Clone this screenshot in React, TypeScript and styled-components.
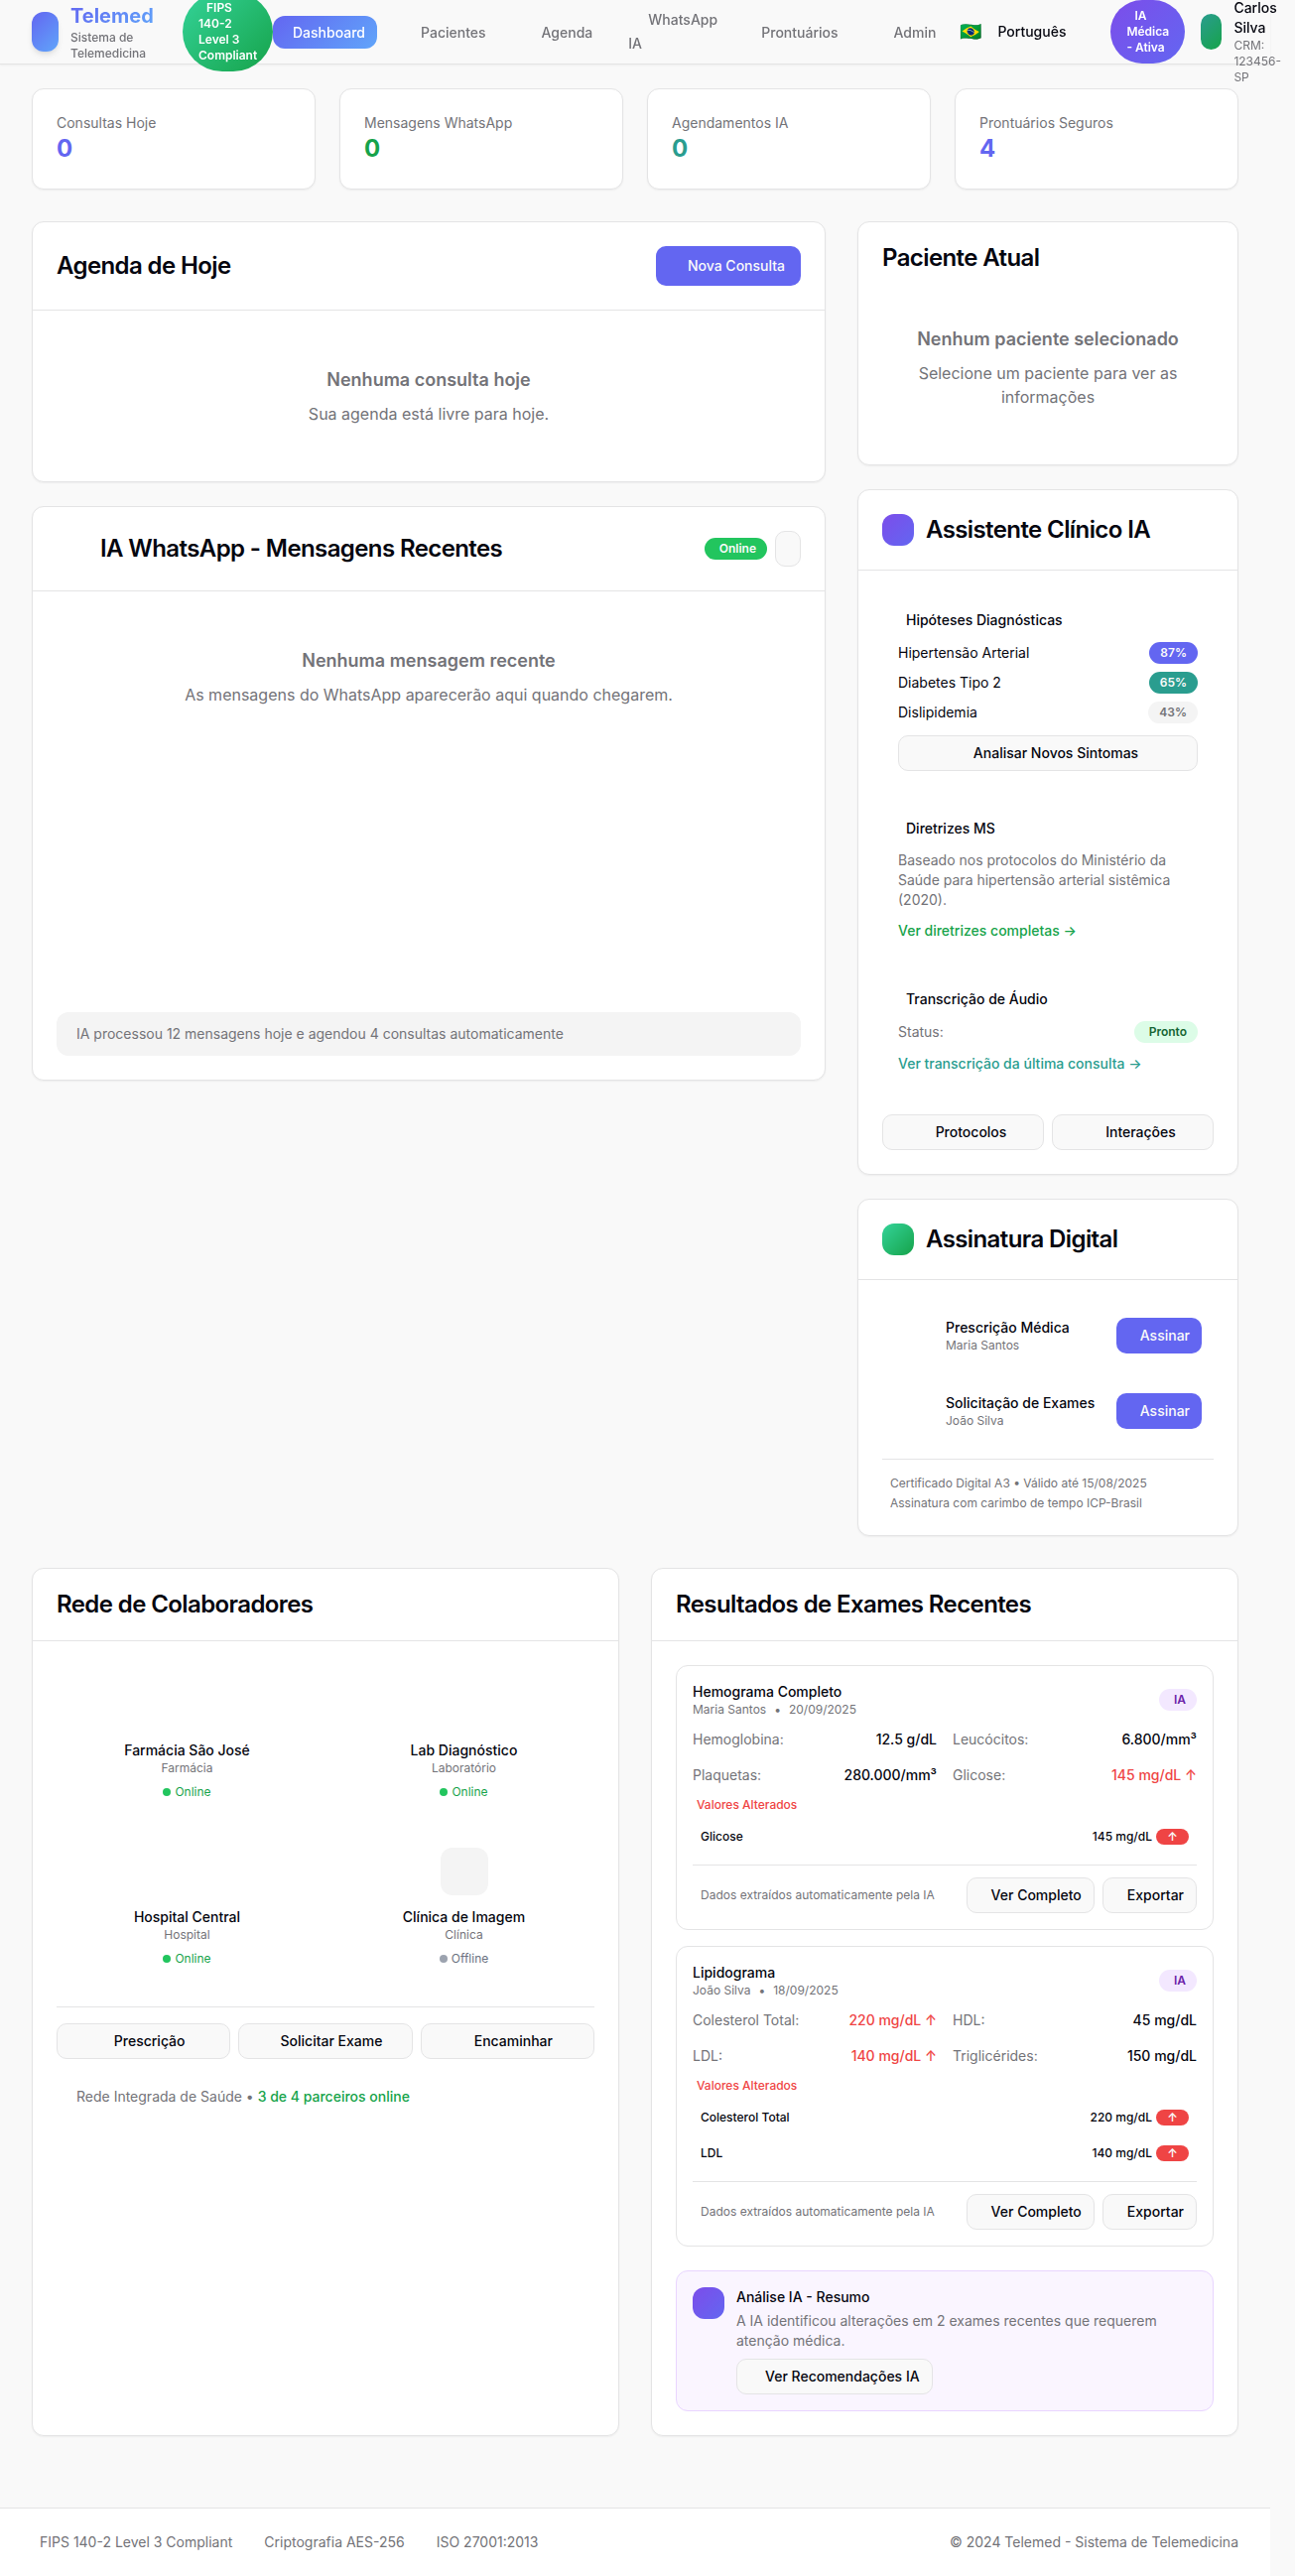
import React from "react";
import styled, { createGlobalStyle, css } from "styled-components";

const c = {
  bg: "#f9f9f9",
  card: "#ffffff",
  border: "#e4e4e5",
  text: "#05060f",
  muted: "#737378",
  soft: "#f4f4f4",
  primary: "#6366f1",
  green: "#16a34a",
  teal: "#2a9d8f",
  red: "#ef4444",
};

const grad = {
  primary: "linear-gradient(135deg, #6366f1, #60a5fa)",
  security: "linear-gradient(135deg, #34d399, #16a34a)",
  ai: "linear-gradient(135deg, #7c4dea, #6366f1)",
  avatar: "linear-gradient(135deg, #2a9d8f, #16a34a)",
};

const Global = createGlobalStyle`
  *, *::before, *::after { box-sizing: border-box; }
  body {
    margin: 0;
    background: ${c.bg};
    color: ${c.text};
    font-family: Inter, "Liberation Sans", sans-serif;
    font-size: 16px;
    line-height: 24px;
    overflow-x: hidden;
  }
  h1, h2, h3, h4, p { margin: 0; }
  button { font-family: inherit; margin: 0; }
`;

const Page = styled.div`
  width: 1280px;
`;

/* ---------- header ---------- */

const Header = styled.header`
  position: relative;
  display: flex;
  align-items: center;
  height: 65px;
  padding: 0 32px;
  background: rgba(249, 249, 249, 0.95);
  border-bottom: 1px solid ${c.border};
  box-shadow: 0 1px 2px rgba(0, 0, 0, 0.05);
  backdrop-filter: blur(4px);
  > * { flex-shrink: 0; }
`;

const Brand = styled.div`
  display: flex;
  align-items: center;
  gap: 12px;
  width: 152px;
`;

const Logo = styled.div`
  width: 27px;
  height: 40px;
  flex-shrink: 0;
  border-radius: 12px;
  background: ${grad.primary};
  box-shadow: 0 4px 6px -1px rgba(0, 0, 0, 0.1), 0 2px 4px -2px rgba(0, 0, 0, 0.1);
`;

const BrandText = styled.div`
  width: 84px;
`;

const BrandName = styled.h1`
  font-size: 20px;
  line-height: 28px;
  font-weight: 700;
  background: ${grad.primary};
  background-clip: text;
  -webkit-background-clip: text;
  color: transparent;
`;

const BrandSub = styled.p`
  font-size: 12px;
  line-height: 16px;
  font-weight: 500;
  color: ${c.muted};
`;

const HeaderPill = styled.div<{ $w: number; $bg: string }>`
  width: ${(p) => p.$w}px;
  padding: 8px 16px;
  border-radius: 999px;
  background: ${(p) => p.$bg};
  color: #fff;
  font-size: 12px;
  line-height: 16px;
  font-weight: 600;
  text-indent: 8px;
`;

const Nav = styled.nav`
  display: flex;
  align-items: center;
  gap: 24px;
`;

const NavItem = styled.a<{ $active?: boolean }>`
  padding: 8px 12px 8px 20px;
  border-radius: 12px;
  font-size: 14px;
  line-height: 17px;
  font-weight: 500;
  color: ${(p) => (p.$active ? "#fff" : c.muted)};
  background: ${(p) => (p.$active ? grad.primary : "none")};
`;

const NavWrapped = styled.a`
  width: 90px;
  font-size: 14px;
  line-height: 24px;
  font-weight: 500;
  color: ${c.muted};
  text-indent: 20px;
`;

const Language = styled.div`
  display: flex;
  align-items: center;
  gap: 16px;
  margin-left: 12px;
  width: 152px;
  font-size: 14px;
  line-height: 20px;
  font-weight: 500;
`;

const Flag = styled.span`
  width: 22px;
  font-size: 18px;
  line-height: 28px;
`;

const Avatar = styled.div`
  width: 21px;
  height: 36px;
  margin: 0 12px 0 16px;
  border-radius: 999px;
  background: ${grad.avatar};
`;

const Doctor = styled.div`
  width: 48px;
  margin-top: 20px;
`;

const DoctorName = styled.p`
  font-size: 14px;
  line-height: 20px;
  font-weight: 500;
`;

const DoctorCrm = styled.p`
  font-size: 12px;
  line-height: 16px;
  color: ${c.muted};
`;

/* ---------- shared parts ---------- */

const Main = styled.main`
  padding: 24px 32px;
`;

const Card = styled.section`
  background: ${c.card};
  border: 1px solid ${c.border};
  border-radius: 12px;
  box-shadow: 0 1px 2px rgba(0, 0, 0, 0.05);
`;

const CardHeader = styled.div<{ $plain?: boolean }>`
  display: flex;
  align-items: center;
  justify-content: space-between;
  padding: 24px;
  ${(p) => !p.$plain && css`border-bottom: 1px solid ${c.border};`}
`;

const Title = styled.h2<{ $indent?: number }>`
  margin-left: ${(p) => p.$indent ?? 0}px;
  font-size: 24px;
  line-height: 24px;
  font-weight: 600;
  letter-spacing: -0.6px;
`;

const TitleGroup = styled.div`
  display: flex;
  align-items: center;
  gap: 12px;
`;

const Tile = styled.div<{ $bg: string; $size?: number }>`
  width: ${(p) => p.$size ?? 32}px;
  height: ${(p) => p.$size ?? 32}px;
  flex-shrink: 0;
  border-radius: 12px;
  background: ${(p) => p.$bg};
`;

const CardBody = styled.div<{ $flush?: boolean }>`
  padding: ${(p) => (p.$flush ? "0 24px 24px" : "24px")};
`;

const Button = styled.button<{ $primary?: boolean; $lead?: number; $h?: number; $px?: number }>`
  display: inline-flex;
  align-items: center;
  justify-content: center;
  height: ${(p) => p.$h ?? 36}px;
  padding: 0 ${(p) => p.$px ?? 12}px;
  border-radius: 10px;
  border: ${(p) => (p.$primary ? "0" : `1px solid ${c.border}`)};
  background: ${(p) => (p.$primary ? c.primary : c.bg)};
  color: ${(p) => (p.$primary ? "#fafafa" : c.text)};
  font-size: 14px;
  line-height: 20px;
  font-weight: 500;
  white-space: nowrap;
  > span { margin-left: ${(p) => p.$lead ?? 12}px; }
`;

const Badge = styled.span<{ $bg: string; $fg: string; $lead?: number }>`
  display: inline-flex;
  align-items: center;
  height: 22px;
  padding: 0 11px 0 ${(p) => 11 + (p.$lead ?? 0)}px;
  border-radius: 999px;
  background: ${(p) => p.$bg};
  color: ${(p) => p.$fg};
  font-size: 12px;
  line-height: 16px;
  font-weight: 600;
`;

const Empty = styled.div`
  padding: 32px;
  text-align: center;
  color: ${c.muted};
  h3 {
    margin-bottom: 8px;
    font-size: 18px;
    line-height: 28px;
    font-weight: 600;
  }
`;

const Row = styled.div<{ $gap?: number }>`
  display: flex;
  align-items: center;
  gap: ${(p) => p.$gap ?? 8}px;
`;

const Between = styled.div`
  display: flex;
  align-items: center;
  justify-content: space-between;
`;

/* ---------- stats ---------- */

const Stats = styled.div`
  display: grid;
  grid-template-columns: repeat(4, 1fr);
  gap: 24px;
  margin-bottom: 32px;
`;

const StatCard = styled(Card)`
  padding: 24px;
`;

const StatLabel = styled.p`
  font-size: 14px;
  line-height: 20px;
  color: ${c.muted};
`;

const StatValue = styled.p<{ $color: string }>`
  font-size: 24px;
  line-height: 32px;
  font-weight: 700;
  color: ${(p) => p.$color};
`;

/* ---------- columns ---------- */

const Columns = styled.div`
  display: grid;
  grid-template-columns: 800px 384px;
  gap: 32px;
  margin-bottom: 32px;
`;

const Stack = styled.div<{ $gap?: number }>`
  display: flex;
  flex-direction: column;
  gap: ${(p) => p.$gap ?? 24}px;
`;

const Halves = styled.div`
  display: grid;
  grid-template-columns: 1fr 1fr;
  gap: 32px;
`;

const Messages = styled.div`
  height: 384px;
  margin-bottom: 16px;
`;

const Notice = styled.div<{ $bg?: string; $top?: number }>`
  margin-top: ${(p) => p.$top ?? 0}px;
  padding: 12px 12px 12px 20px;
  border-radius: 12px;
  background: ${(p) => p.$bg ?? "transparent"};
  font-size: 14px;
  line-height: 20px;
  color: ${c.muted};
  b { font-weight: 500; color: ${c.green}; }
`;

const IconButton = styled.button`
  width: 26px;
  height: 36px;
  padding: 0;
  border: 1px solid ${c.border};
  border-radius: 10px;
  background: ${c.bg};
`;

/* ---------- assistant ---------- */

const Panel = styled.div`
  padding: 16px;
`;

const PanelTitle = styled.h4`
  margin: 0 0 12px 8px;
  font-size: 14px;
  line-height: 20px;
  font-weight: 500;
`;

const PanelText = styled.p<{ $strong?: boolean }>`
  font-size: 14px;
  line-height: 20px;
  color: ${(p) => (p.$strong ? c.text : c.muted)};
`;

const PanelLink = styled.div<{ $color: string }>`
  margin-top: 8px;
  span {
    font-size: 14px;
    line-height: 20px;
    font-weight: 500;
    color: ${(p) => p.$color};
  }
`;

const Actions = styled.div<{ $cols: number; $top?: number }>`
  display: grid;
  grid-template-columns: repeat(${(p) => p.$cols}, 1fr);
  gap: 8px;
  margin-top: ${(p) => p.$top ?? 0}px;
`;

/* ---------- signature ---------- */

const SignItem = styled.div`
  display: flex;
  align-items: center;
  height: 64px;
  padding: 0 12px 0 64px;
  > div { flex: 1; }
`;

const ItemName = styled.p`
  font-size: 14px;
  line-height: 20px;
  font-weight: 500;
`;

const Small = styled.p`
  font-size: 12px;
  line-height: 16px;
  color: ${c.muted};
`;

const SignNotes = styled.div`
  display: grid;
  gap: 4px;
  margin-top: 16px;
  padding: 16px 0 0 8px;
  border-top: 1px solid ${c.border};
`;

/* ---------- partners ---------- */

const PartnerGrid = styled.div`
  display: grid;
  grid-template-columns: 1fr 1fr;
  gap: 16px;
  padding-bottom: 24px;
  margin-bottom: 16px;
  border-bottom: 1px solid ${c.border};
`;

const Partner = styled.div`
  display: flex;
  flex-direction: column;
  align-items: center;
  padding: 16px;
  ${Tile} { margin-bottom: 12px; }
`;

const Status = styled.div<{ $online: boolean }>`
  display: flex;
  align-items: center;
  gap: 4px;
  margin-top: 8px;
  font-size: 12px;
  line-height: 16px;
  color: ${(p) => (p.$online ? c.green : "#6b7280")};
  &::before {
    content: "";
    width: 8px;
    height: 8px;
    border-radius: 50%;
    background: ${(p) => (p.$online ? "#22c55e" : "#9ca3af")};
  }
`;

/* ---------- exams ---------- */

const Exam = styled.article`
  padding: 16px;
  border: 1px solid ${c.border};
  border-radius: 12px;
`;

const Values = styled.div`
  display: grid;
  grid-template-columns: 1fr 1fr;
  gap: 16px;
  margin: 12px 0;
`;

const Value = styled.div<{ $alert?: boolean }>`
  display: flex;
  justify-content: space-between;
  font-size: 14px;
  line-height: 20px;
  color: ${c.muted};
  b {
    font-weight: 500;
    color: ${(p) => (p.$alert ? c.red : c.text)};
  }
`;

const AlertTitle = styled.p`
  margin: 0 0 8px 4px;
  font-size: 12px;
  line-height: 16px;
  font-weight: 500;
  color: ${c.red};
`;

const AlertRow = styled(Between)`
  padding: 8px;
  font-size: 12px;
  line-height: 16px;
  font-weight: 500;
`;

const Arrow = styled.span`
  width: 33px;
  height: 16px;
  border-radius: 999px;
  background: ${c.red};
  color: #fafafa;
  text-align: center;
  font-weight: 600;
`;

const ExamFooter = styled(Between)`
  margin-top: 12px;
  padding: 12px 0 0 8px;
  border-top: 1px solid ${c.border};
`;

const Summary = styled.div`
  display: flex;
  align-items: flex-start;
  gap: 12px;
  margin-top: 24px;
  padding: 16px;
  border: 1px solid #e9d5ff;
  border-radius: 12px;
  background: #faf5ff;
`;

const SummaryText = styled.p`
  margin: 4px 0 8px;
  font-size: 14px;
  line-height: 20px;
  color: ${c.muted};
`;

/* ---------- footer ---------- */

const Footer = styled.footer`
  display: flex;
  justify-content: space-between;
  margin-top: 48px;
  padding: 24px 32px;
  border-top: 1px solid ${c.border};
  background: #fff;
  font-size: 14px;
  line-height: 20px;
  color: ${c.muted};
`;

const FooterLinks = styled.div`
  display: flex;
  gap: 32px;
  padding-left: 8px;
`;

/* ---------- data ---------- */

const stats = [
  { label: "Consultas Hoje", value: 0, color: c.primary },
  { label: "Mensagens WhatsApp", value: 0, color: c.green },
  { label: "Agendamentos IA", value: 0, color: c.teal },
  { label: "Prontuários Seguros", value: 4, color: c.primary },
];

const hypotheses = [
  { name: "Hipertensão Arterial", pct: "87%", bg: c.primary, fg: "#fafafa" },
  { name: "Diabetes Tipo 2", pct: "65%", bg: c.teal, fg: "#fafafa" },
  { name: "Dislipidemia", pct: "43%", bg: c.soft, fg: c.muted },
];

const documents = [
  { name: "Prescrição Médica", patient: "Maria Santos" },
  { name: "Solicitação de Exames", patient: "João Silva" },
];

const partners = [
  { name: "Farmácia São José", kind: "Farmácia", online: true },
  { name: "Lab Diagnóstico", kind: "Laboratório", online: true },
  { name: "Hospital Central", kind: "Hospital", online: true },
  { name: "Clínica de Imagem", kind: "Clínica", online: false },
];

type ExamData = {
  name: string;
  patient: string;
  date: string;
  values: { label: string; value: string; alert?: boolean }[];
  alerts: { label: string; value: string }[];
};

const exams: ExamData[] = [
  {
    name: "Hemograma Completo",
    patient: "Maria Santos",
    date: "20/09/2025",
    values: [
      { label: "Hemoglobina:", value: "12.5 g/dL" },
      { label: "Leucócitos:", value: "6.800/mm³" },
      { label: "Plaquetas:", value: "280.000/mm³" },
      { label: "Glicose:", value: "145 mg/dL ↑", alert: true },
    ],
    alerts: [{ label: "Glicose", value: "145 mg/dL" }],
  },
  {
    name: "Lipidograma",
    patient: "João Silva",
    date: "18/09/2025",
    values: [
      { label: "Colesterol Total:", value: "220 mg/dL ↑", alert: true },
      { label: "HDL:", value: "45 mg/dL" },
      { label: "LDL:", value: "140 mg/dL ↑", alert: true },
      { label: "Triglicérides:", value: "150 mg/dL" },
    ],
    alerts: [
      { label: "Colesterol Total", value: "220 mg/dL" },
      { label: "LDL", value: "140 mg/dL" },
    ],
  },
];

function ExamCard({ exam }: { exam: ExamData }) {
  return (
    <Exam>
      <Between>
        <div>
          <ItemName>{exam.name}</ItemName>
          <Row>
            <Small>{exam.patient}</Small>
            <Small>•</Small>
            <Small>{exam.date}</Small>
          </Row>
        </div>
        <Badge $bg="#f3e8ff" $fg="#6b21a8" $lead={4}>IA</Badge>
      </Between>
      <Values>
        {exam.values.map((v) => (
          <Value key={v.label} $alert={v.alert}>
            <span>{v.label}</span>
            <b>{v.value}</b>
          </Value>
        ))}
      </Values>
      <AlertTitle>Valores Alterados</AlertTitle>
      <Stack $gap={4}>
        {exam.alerts.map((a) => (
          <AlertRow key={a.label}>
            <span>{a.label}</span>
            <Row $gap={4}>
              <span>{a.value}</span>
              <Arrow>↑</Arrow>
            </Row>
          </AlertRow>
        ))}
      </Stack>
      <ExamFooter>
        <Small>Dados extraídos automaticamente pela IA</Small>
        <Row>
          <Button><span>Ver Completo</span></Button>
          <Button><span>Exportar</span></Button>
        </Row>
      </ExamFooter>
    </Exam>
  );
}

export default function App() {
  return (
    <Page>
      <Global />
      <Header>
        <Brand>
          <Logo />
          <BrandText>
            <BrandName>Telemed</BrandName>
            <BrandSub>Sistema de Telemedicina</BrandSub>
          </BrandText>
        </Brand>
        <HeaderPill $w={91} $bg={grad.security}>FIPS 140-2 Level 3 Compliant</HeaderPill>
        <Nav>
          <NavItem $active>Dashboard</NavItem>
          <NavItem>Pacientes</NavItem>
          <NavItem>Agenda</NavItem>
          <NavWrapped>WhatsApp IA</NavWrapped>
          <NavItem>Prontuários</NavItem>
          <NavItem>Admin</NavItem>
        </Nav>
        <Language>
          <Flag>🇧🇷</Flag>
          <span>Português</span>
        </Language>
        <HeaderPill $w={75} $bg={grad.ai}>IA Médica - Ativa</HeaderPill>
        <Avatar />
        <Doctor>
          <DoctorName>Carlos Silva</DoctorName>
          <DoctorCrm>CRM: 123456-SP</DoctorCrm>
        </Doctor>
      </Header>

      <Main>
        <Stats>
          {stats.map((s) => (
            <StatCard key={s.label}>
              <StatLabel>{s.label}</StatLabel>
              <StatValue $color={s.color}>{s.value}</StatValue>
            </StatCard>
          ))}
        </Stats>

        <Columns>
          <Stack>
            <Card>
              <CardHeader>
                <Title>Agenda de Hoje</Title>
                <Button $primary $h={40} $px={16} $lead={16}><span>Nova Consulta</span></Button>
              </CardHeader>
              <CardBody>
                <Empty>
                  <h3>Nenhuma consulta hoje</h3>
                  <p>Sua agenda está livre para hoje.</p>
                </Empty>
              </CardBody>
            </Card>
            <Card>
              <CardHeader>
                <Title $indent={44}>IA WhatsApp - Mensagens Recentes</Title>
                <Row>
                  <Badge $bg="#22c55e" $fg="#fafafa" $lead={4}>Online</Badge>
                  <IconButton />
                </Row>
              </CardHeader>
              <CardBody>
                <Messages>
                  <Empty>
                    <h3>Nenhuma mensagem recente</h3>
                    <p>As mensagens do WhatsApp aparecerão aqui quando chegarem.</p>
                  </Empty>
                </Messages>
                <Notice $bg={c.soft}>IA processou 12 mensagens hoje e agendou 4 consultas automaticamente</Notice>
              </CardBody>
            </Card>
          </Stack>

          <Stack>
            <Card>
              <CardHeader $plain>
                <Title>Paciente Atual</Title>
              </CardHeader>
              <CardBody $flush>
                <Empty>
                  <h3>Nenhum paciente selecionado</h3>
                  <p>Selecione um paciente para ver as informações</p>
                </Empty>
              </CardBody>
            </Card>

            <Card>
              <CardHeader>
                <TitleGroup>
                  <Tile $bg={grad.ai} />
                  <Title>Assistente Clínico IA</Title>
                </TitleGroup>
              </CardHeader>
              <CardBody>
                <Stack $gap={16}>
                  <Panel>
                    <PanelTitle>Hipóteses Diagnósticas</PanelTitle>
                    <Stack $gap={8}>
                      {hypotheses.map((h) => (
                        <Between key={h.name}>
                          <PanelText $strong>{h.name}</PanelText>
                          <Badge $bg={h.bg} $fg={h.fg}>{h.pct}</Badge>
                        </Between>
                      ))}
                    </Stack>
                    <Actions $cols={1} $top={12}>
                      <Button $lead={16}><span>Analisar Novos Sintomas</span></Button>
                    </Actions>
                  </Panel>
                  <Panel>
                    <PanelTitle>Diretrizes MS</PanelTitle>
                    <PanelText>
                      Baseado nos protocolos do Ministério da Saúde para hipertensão arterial sistêmica (2020).
                    </PanelText>
                    <PanelLink $color={c.green}><span>Ver diretrizes completas →</span></PanelLink>
                  </Panel>
                  <Panel>
                    <PanelTitle>Transcrição de Áudio</PanelTitle>
                    <Between>
                      <PanelText>Status:</PanelText>
                      <Badge $bg="#dcfce7" $fg="#166534" $lead={4}>Pronto</Badge>
                    </Between>
                    <PanelLink $color={c.teal}><span>Ver transcrição da última consulta →</span></PanelLink>
                  </Panel>
                </Stack>
                <Actions $cols={2} $top={24}>
                  <Button $lead={16}><span>Protocolos</span></Button>
                  <Button $lead={16}><span>Interações</span></Button>
                </Actions>
              </CardBody>
            </Card>

            <Card>
              <CardHeader>
                <TitleGroup>
                  <Tile $bg={grad.security} />
                  <Title>Assinatura Digital</Title>
                </TitleGroup>
              </CardHeader>
              <CardBody>
                <Stack $gap={12}>
                  {documents.map((d) => (
                    <SignItem key={d.name}>
                      <div>
                        <ItemName>{d.name}</ItemName>
                        <Small>{d.patient}</Small>
                      </div>
                      <Button $primary><span>Assinar</span></Button>
                    </SignItem>
                  ))}
                </Stack>
                <SignNotes>
                  <Small>Certificado Digital A3 • Válido até 15/08/2025</Small>
                  <Small>Assinatura com carimbo de tempo ICP-Brasil</Small>
                </SignNotes>
              </CardBody>
            </Card>
          </Stack>
        </Columns>

        <Halves>
          <Card>
            <CardHeader>
              <Title>Rede de Colaboradores</Title>
            </CardHeader>
            <CardBody>
              <PartnerGrid>
                {partners.map((p) => (
                  <Partner key={p.name}>
                    <Tile $size={48} $bg={p.online ? "transparent" : c.soft} />
                    <ItemName>{p.name}</ItemName>
                    <Small>{p.kind}</Small>
                    <Status $online={p.online}>{p.online ? "Online" : "Offline"}</Status>
                  </Partner>
                ))}
              </PartnerGrid>
              <Actions $cols={3}>
                <Button><span>Prescrição</span></Button>
                <Button><span>Solicitar Exame</span></Button>
                <Button><span>Encaminhar</span></Button>
              </Actions>
              <Notice $top={16}>Rede Integrada de Saúde • <b>3 de 4 parceiros online</b></Notice>
            </CardBody>
          </Card>

          <Card>
            <CardHeader>
              <Title>Resultados de Exames Recentes</Title>
            </CardHeader>
            <CardBody>
              <Stack $gap={16}>
                {exams.map((e) => (
                  <ExamCard key={e.name} exam={e} />
                ))}
              </Stack>
              <Summary>
                <Tile $bg={grad.ai} />
                <div>
                  <ItemName>Análise IA - Resumo</ItemName>
                  <SummaryText>
                    A IA identificou alterações em 2 exames recentes que requerem atenção médica.
                  </SummaryText>
                  <Row>
                    <Button $lead={16}><span>Ver Recomendações IA</span></Button>
                  </Row>
                </div>
              </Summary>
            </CardBody>
          </Card>
        </Halves>
      </Main>

      <Footer>
        <FooterLinks>
          <span>FIPS 140-2 Level 3 Compliant</span>
          <span>Criptografia AES-256</span>
          <span>ISO 27001:2013</span>
        </FooterLinks>
        <span>© 2024 Telemed - Sistema de Telemedicina</span>
      </Footer>
    </Page>
  );
}
